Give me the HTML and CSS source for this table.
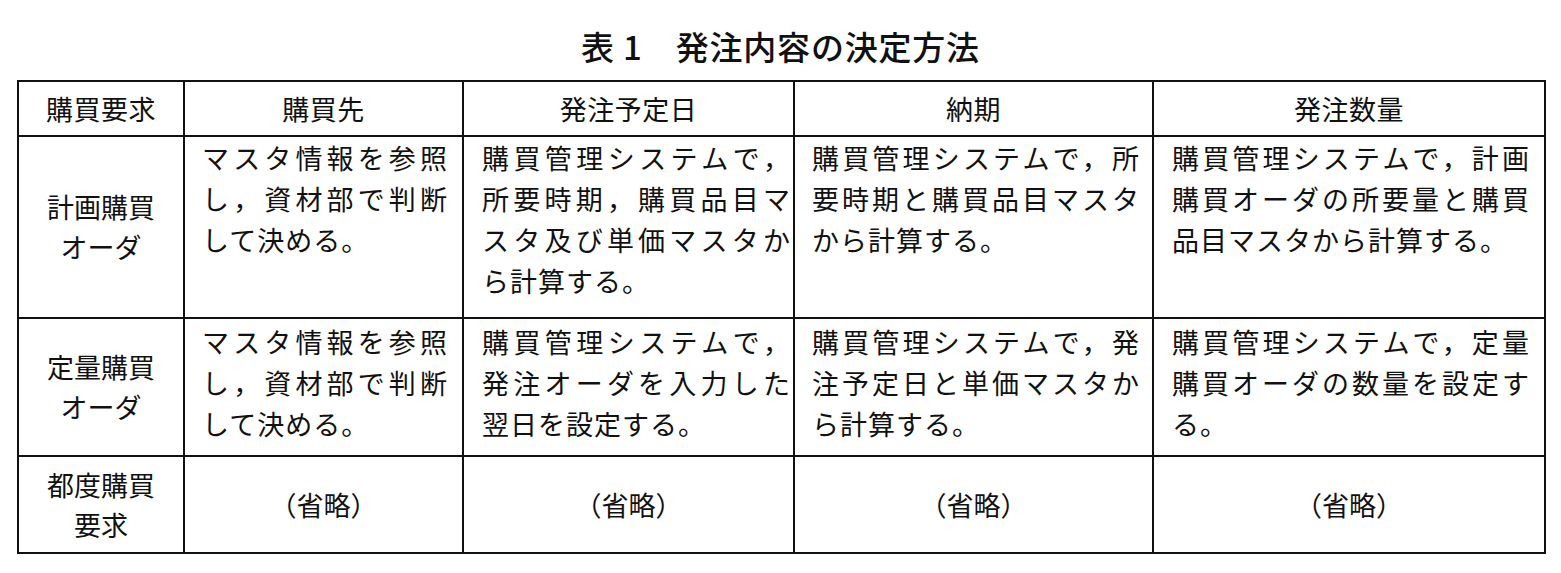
FILE: index.html
```html
<!DOCTYPE html>
<html lang="ja">
<head>
<meta charset="utf-8">
<title>表1 発注内容の決定方法</title>
<link rel="stylesheet" href="styles.css">
</head>
<body>
<h1 class="title"><span class="title-no">表 1</span><span class="title-text">発注内容の決定方法</span></h1>
<table class="spec">
  <colgroup>
    <col class="c1"><col class="c2"><col class="c3"><col class="c4"><col class="c5">
  </colgroup>
  <tr class="head">
    <th>購買要求</th>
    <th>購買先</th>
    <th>発注予定日</th>
    <th>納期</th>
    <th>発注数量</th>
  </tr>
  <tr class="r1">
    <th class="kind">計画購買<br>オーダ</th>
    <td class="p2"><span class="j">マスタ情報を参照</span><span class="j">し，資材部で判断</span><span class="l">して決める。</span></td>
    <td class="p3"><span class="j">購買管理システムで，</span><span class="j">所要時期，購買品目マ</span><span class="j">スタ及び単価マスタか</span><span class="l">ら計算する。</span></td>
    <td class="p4"><span class="j">購買管理システムで，所</span><span class="j">要時期と購買品目マスタ</span><span class="l">から計算する。</span></td>
    <td class="p5"><span class="j">購買管理システムで，計画</span><span class="j">購買オーダの所要量と購買</span><span class="l">品目マスタから計算する。</span></td>
  </tr>
  <tr class="r2">
    <th class="kind">定量購買<br>オーダ</th>
    <td class="p2"><span class="j">マスタ情報を参照</span><span class="j">し，資材部で判断</span><span class="l">して決める。</span></td>
    <td class="p3"><span class="j">購買管理システムで，</span><span class="j">発注オーダを入力した</span><span class="l">翌日を設定する。</span></td>
    <td class="p4"><span class="j">購買管理システムで，発</span><span class="j">注予定日と単価マスタか</span><span class="l">ら計算する。</span></td>
    <td class="p5"><span class="j">購買管理システムで，定量</span><span class="j">購買オーダの数量を設定す</span><span class="l">る。</span></td>
  </tr>
  <tr class="r3">
    <th class="kind">都度購買<br>要求</th>
    <td class="omit">（省略）</td>
    <td class="omit">（省略）</td>
    <td class="omit">（省略）</td>
    <td class="omit">（省略）</td>
  </tr>
</table>
</body>
</html>
```

FILE: styles.css
```css
html, body {
  margin: 0;
  padding: 0;
  background: #ffffff;
  color: #111111;
  font-family: "Noto Sans CJK JP", "Noto Sans", sans-serif;
}

.title {
  box-sizing: border-box;
  height: 80px;
  margin: 0;
  padding-top: 12px;
  display: flex;
  align-items: center;
  justify-content: center;
  gap: 33px;
  font-size: 33px;
  font-weight: 500;
  line-height: 40px;
  letter-spacing: 0.8px;
}

.spec {
  border-collapse: collapse;
  table-layout: fixed;
  width: 1527px;
  margin-left: 17px;
  font-size: 27px;
  line-height: 41px;
}

.c1 { width: 166px; }
.c2 { width: 279px; }
.c3 { width: 331px; }
.c4 { width: 359px; }
.c5 { width: 392px; }

.spec th,
.spec td {
  border: 2px solid #111111;
  padding: 0;
  font-weight: normal;
}

.head { height: 55px; }
.r1 { height: 182px; }
.r2 { height: 138px; }
.r3 { height: 97px; }

.head th {
  text-align: center;
  vertical-align: middle;
  letter-spacing: 0.5px;
}

.kind {
  text-align: center;
  vertical-align: middle;
  line-height: 40px;
}

.spec td {
  vertical-align: top;
  letter-spacing: 1px;
}

.r1 td { padding-top: 0; }
.r2 td { padding-top: 2px; }

.p2 { padding-left: 17px !important; padding-right: 14px !important; }
.p3 { padding-left: 18px !important; padding-right: 2px !important; }
.p4 { padding-left: 17px !important; padding-right: 12px !important; }
.p5 { padding-left: 18px !important; padding-right: 14px !important; }

.j {
  display: block;
  text-align: justify;
  text-align-last: justify;
  text-justify: inter-character;
}

.l {
  display: block;
  text-align: left;
}

.spec td.omit {
  text-align: center;
  vertical-align: middle;
  letter-spacing: 0;
}
```
